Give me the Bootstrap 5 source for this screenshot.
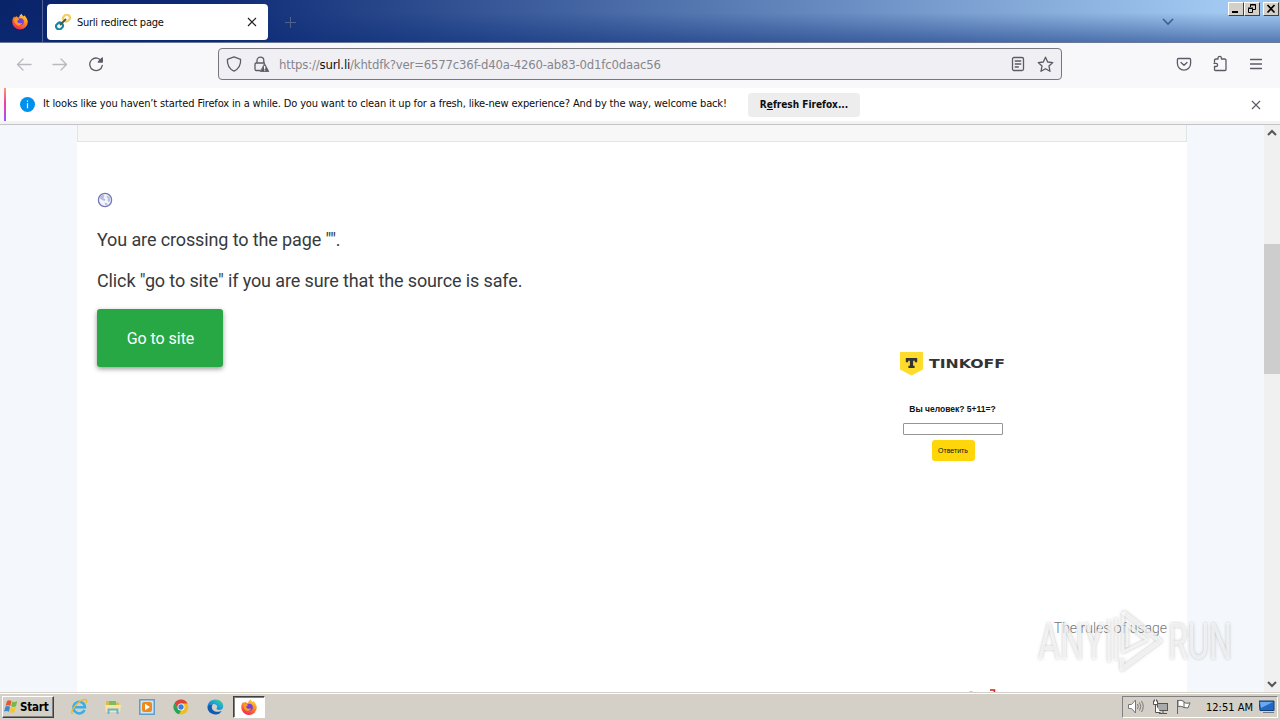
<!DOCTYPE html>
<html lang="en">
<head>
<meta charset="utf-8">
<meta name="viewport" content="width=device-width, initial-scale=1">
<title>Surli redirect page</title>
<link href="https://cdn.jsdelivr.net/npm/bootstrap@5.3.0/dist/css/bootstrap.min.css" rel="stylesheet">
<style>
body{width:1280px;height:720px;overflow:hidden;font-family:"DejaVu Sans Condensed","DejaVu Sans",sans-serif;font-size:11px;line-height:14px;color:#0c0c0d}
svg{display:block;flex:none}
.ui-ico{fill:none;stroke:#5b5b66;stroke-width:1.3;stroke-linecap:round;stroke-linejoin:round}
.titlebar{height:43px;background:linear-gradient(180deg,rgba(10,50,130,0) 30%,rgba(10,44,120,.5)),linear-gradient(90deg,#0a246a,#0d2a74 16%,#a0c8f0 95%);border-bottom:1px solid #6b7794}
.ff-view{width:43px;padding-right:2px;border-right:1px solid #52639a}
.tab{width:221px;height:36px;margin:4px 0 0 4px;background:#fff;border-radius:4px;padding:0 10px 0 8px}
.tab-title{margin:2px 0 0 6px;letter-spacing:-.25px}
.winbtn{width:16px;height:14px;background:#d4d0c8;border:1px solid;border-color:#fff #404040 #404040 #fff}
.tools{height:45px;background:#f8f8fb}
.tools .back{margin-left:16px}
.urlbar{width:844px;height:32px;margin-left:114px;background:#f0f0f4;border:1px solid #77777e;border-radius:4px;padding:0 7px}
.url{font-size:13px;font-weight:200;color:#85858d;margin:2px 0 0 9px;letter-spacing:-.18px;white-space:nowrap}
.url b{font-weight:400;color:#111}
.notice{height:33px;background:#fff;border-left:4px solid #f9f9fb}
.notice-edge{width:2px;height:33px;background:linear-gradient(#ff9a6a,#f0409a 45%,#9059ff)}
.notice-text{margin:-2px 0 0 8px;width:705px;white-space:nowrap;letter-spacing:-.15px}
.refresh{width:112px;height:24px;background:#ededee;border-radius:4px;font-weight:700;font-size:10px;line-height:24px;text-align:center;white-space:nowrap}
.chrome-end{height:4px;background:#f3f3f4;border-bottom:1px solid #c4c4c8}
.page-view{height:567px;background:#f4f8fc;overflow:hidden}
.sheet{width:1110px;margin-left:77px;background:#fff;font-family:Roboto,sans-serif;color:#373a3c}
.sheet-top{height:17px;background:#f7f7f7;border:1px solid #dfe5e8;border-top:0}
.msg{font-size:18px;line-height:24px;white-space:nowrap;letter-spacing:-.12px}
.go{width:126px;height:58px;background:#28a745;color:#fff;border-radius:3px;font-size:16px;line-height:60px;text-align:center;text-indent:1px;letter-spacing:-.05px;box-shadow:0 2px 5px rgba(0,0,0,.4)}
.captcha{width:108px;margin:41px 161px 0 0;font-family:"Liberation Sans",sans-serif;color:#111}
.ask{font-size:8.5px;line-height:12px;font-weight:700;margin:27px 0 0 1px;white-space:nowrap}
.answer{width:100px;height:12px;border:1px solid #959595;border-radius:1px;margin:8px 0 0 2px}
.reply{width:43px;height:21px;background:#ffd60a;border-radius:3px;font-size:7px;line-height:21px;text-align:center;margin:5px 0 0 2px}
.rules{font-size:14px;line-height:20px;color:#777;font-weight:300}
.scroller{width:16px;background:#f0f0f0}
.thumb{height:130px;background:#cdcdcd}
.taskbar{height:28px;background:#d4d0c8;border-top:1px solid #d4d0c8;box-shadow:inset 0 1px #fff}
.start{width:52px;height:22px;margin-left:2px;border:1px solid;border-color:#fff #404040 #404040 #fff;box-shadow:inset -1px -1px #808080;font-size:11.5px;font-weight:700;letter-spacing:-.2px;color:#000}
.task-on{width:32px;height:22px;background:#fff;border:1px solid;border-color:#404040 #fff #fff #404040;box-shadow:inset 1px 1px #808080}
.tray{width:156px;height:22px;border:1px solid;border-color:#808080 #fff #fff #808080;margin-right:2px;color:#000}
.brandmark{left:1030px;top:604px}
</style>
</head>
<body class="d-flex flex-column position-relative">
<svg width="0" height="0" class="position-absolute">
<defs>
<linearGradient id="fg" x1=".8" y1="0" x2=".3" y2="1"><stop offset="0" stop-color="#ffe047"/><stop offset=".45" stop-color="#ff8a1e"/><stop offset="1" stop-color="#f0255a"/></linearGradient>
<linearGradient id="eg" x1="0" y1="1" x2="1" y2="0"><stop offset="0" stop-color="#0b63b5"/><stop offset=".55" stop-color="#1ba5dc"/><stop offset="1" stop-color="#58d46a"/></linearGradient>
<symbol id="firefox" viewBox="0 0 16 16"><path fill="url(#fg)" d="M9.700.2c.2 1.400 1.200 2 2.100 2.800.3-.4.2-.8.2-1.200C14 3.300 15.800 5.800 15.800 8.500A7.700 7.500 0 0 1 .3 8.500C.2 6 1 4.300 2.300 2.700l.3 1.500C3.300 3.500 4 3 4.800 2.800c.5.7 1 1.300 2.200 1.300C7.200 2.300 8.200.9 9.700.2z"/><circle cx="8.300" cy="8.300" r="3.500" fill="#7440d8"/><path fill="#ff9b20" d="M2.500 5.100c2-.5 3.200.1 4.600.6-.2 1-1.800 1-1.900 2.300.5 2 3 2.200 5.100 1.200-1 3-4.300 3.500-6 1.800C2.600 9.600 2 7.500 2.500 5.100z"/></symbol>
</defs>
</svg>

<header class="titlebar d-flex flex-shrink-0">
  <div class="ff-view d-flex align-items-center justify-content-center"><svg width="16" height="17"><use href="#firefox"/></svg></div>
  <div class="tab d-flex align-items-center">
    <svg width="16" height="16" viewBox="0 0 16 16" fill="none" stroke-width="2.200"><rect x="8" y="1" width="7" height="6" rx="3" transform="rotate(-40 11.500 4)" stroke="#f0cf62"/><rect x="1" y="9" width="7" height="6" rx="3" transform="rotate(-40 4.500 12)" stroke="#1688a5"/><path d="M5 11l6-6" stroke="#5b5436" stroke-width="1.800"/></svg>
    <span class="tab-title">Surli redirect page</span>
    <svg class="ms-auto" width="12" height="12" viewBox="0 0 12 12" stroke="#222" stroke-width="1.200"><path d="M2 2l8 8M10 2l-8 8"/></svg>
  </div>
  <svg class="ms-3 mt-3" width="13" height="13" viewBox="0 0 13 13" stroke="#50618a"><path d="M6.500 1v11M1 6.500h11"/></svg>
  <svg class="ms-auto" style="margin-right:54px" width="12" height="43" viewBox="0 0 12 43" fill="none" stroke="#3f5f8d" stroke-width="1.600"><path d="M1 19l5 5 5-5"/></svg>
  <div class="d-flex pt-0" style="margin:2px 1px 0 0">
    <div class="winbtn"><svg width="14" height="12"><path d="M3 9h6" stroke="#000" stroke-width="2"/></svg></div>
    <div class="winbtn"><svg width="14" height="12" fill="none" stroke="#000"><path d="M5.500 4V1.500h5v5H8M5 2h6M3.500 5.500h4v4h-4zM3 5h5"/></svg></div>
    <div class="winbtn" style="margin-left:3px"><svg width="14" height="12"><path d="M3.500 2l7 7.500M10.500 2l-7 7.500" stroke="#000" stroke-width="1.700"/></svg></div>
  </div>
</header>

<nav class="tools d-flex align-items-center flex-shrink-0 pb-1">
  <svg class="ui-ico back" style="opacity:.4" width="16" height="16"><path d="M15 8.500H1.500M7 3L1.500 8.500 7 14"/></svg>
  <svg class="ui-ico" style="opacity:.4;margin-left:20px" width="16" height="16"><path d="M1 8.500h13.500M9 3L14.500 8.500 9 14"/></svg>
  <svg class="ui-ico" style="margin-left:20px" width="16" height="16"><path d="M13.700 5.500A6.300 6.300 0 1 0 14.300 9.300"/><path d="M14.300 2v4h-4z" fill="#5b5b66"/></svg>
  <div class="urlbar d-flex align-items-center">
    <svg class="ui-ico" width="16" height="16"><path d="M8 .9l6.600 2.500c.3 5-1.600 9.500-6.600 11.700C3 12.900 1.100 8.400 1.400 3.400z"/></svg>
    <svg class="ui-ico" style="margin-left:11px;margin-top:2px" width="17" height="17"><path d="M4 7V4.500a3.400 3.400 0 0 1 6.800 0V7M7 14.500H3.200A1.200 1.200 0 0 1 2 13.300V8.200A1.200 1.200 0 0 1 3.200 7h8.300"/><path fill="#5b5b66" stroke-width=".8" d="M11.700 7.800l4.100 7.700H7.600z"/><path stroke="#fff" d="M11.700 10.500v2M11.700 14.100v.1"/></svg>
    <span class="url">https://<b>surl.li</b>/khtdfk?ver=6577c36f-d40a-4260-ab83-0d1fc0daac56</span>
    <svg class="ui-ico ms-auto" width="14" height="16"><rect x="1.500" y="1.500" width="11" height="13" rx="1.500"/><path d="M4.200 5h5.600M4.200 8h5.600M4.200 11h3.200"/></svg>
    <svg class="ui-ico" style="margin:1px 0 0 12px" width="17" height="17"><path d="M8.500 1.200l2.200 4.800 5.100.6-3.800 3.500 1 5.200-4.500-2.600L4 15.300l1-5.200L1.200 6.600 6.300 6z"/></svg>
  </div>
  <svg class="ui-ico ms-auto" width="16" height="16"><path d="M2.500 2.500h11A1.200 1.200 0 0 1 14.600 3.700V7.500a6.600 6.600 0 0 1-13.200 0V3.700A1.200 1.200 0 0 1 2.500 2.500zM5 6.500l3 2.800 3-2.800"/></svg>
  <svg class="ui-ico" style="margin-left:20px" width="16" height="17"><path d="M2.500 7V5.200A1.200 1.200 0 0 1 3.700 4H6V3a1.700 1.700 0 0 1 3.400 0v1h3.400A1.200 1.200 0 0 1 14 5.200v9.300a1 1 0 0 1-1 1H3.500a1 1 0 0 1-1-1v-3H4A1.600 1.600 0 0 0 4 8.300H2"/></svg>
  <svg class="ui-ico" style="margin:0 16px 0 20px" width="16" height="16"><path d="M2.500 3.500h11M2.500 8h11M2.500 12.500h11"/></svg>
</nav>

<div class="notice d-flex align-items-center flex-shrink-0">
  <div class="notice-edge"></div>
  <svg style="margin-left:14px" width="15" height="15"><circle cx="7.500" cy="7.500" r="7.500" fill="#0090ed"/><path d="M7.500 6.300v5M7.500 3.500v1.300" stroke="#fff" stroke-width="1.200"/></svg>
  <span class="notice-text">It looks like you haven’t started Firefox in a while. Do you want to clean it up for a fresh, like-new experience? And by the way, welcome back!</span>
  <div class="refresh">R<u>e</u>fresh Firefox...</div>
  <svg class="ms-auto" style="margin-right:19px" width="10" height="10" stroke="#5b5b66" stroke-width="1.100"><path d="M1 1l8 8M9 1L1 9"/></svg>
</div>
<div class="chrome-end flex-shrink-0"></div>

<main class="page-view d-flex flex-shrink-0">
  <article class="sheet">
    <div class="sheet-top"></div>
    <div class="d-flex flex-column" style="padding:50px 20px 0">
      <svg width="16" height="16"><circle cx="8" cy="8" r="6.600" fill="#f4f5fc" stroke="#7376b5" stroke-width="1.300"/><path fill="#b9bcdd" d="M3 5l2.500-2.500 2 1-1 2.500 2 1.500-1 1.500-2.500-1-2-1.500zM10 3.500l2.500 1.500.7 3-1.200 2.500-1.500-2 .5-2-1.500-1.500zM7.500 10.500l3 1v1.500l-2 .5z"/></svg>
      <div class="msg" style="margin-top:20px">You are crossing to the page "".</div>
      <div class="msg" style="margin-top:17px">Click "go to site" if you are sure that the source is safe.</div>
      <div class="d-flex justify-content-between" style="margin-top:16px">
        <div class="go">Go to site</div>
        <section class="captcha d-flex flex-column align-items-center">
          <svg width="108" height="26"><path d="M2 2h23v17.500L13.500 25.500 2 19.500z" fill="#fddc2b"/><path d="M7.800 8h11.400v4.300h-2.400V10.700h-1.700v5h1.500V18h-6.200v-2.300h1.500v-5h-1.700v1.600H7.800z" fill="#333"/><text x="31" y="18" textLength="76" lengthAdjust="spacingAndGlyphs" font-family="DejaVu Sans" font-weight="700" font-size="13" fill="#333">TINKOFF</text></svg>
          <div class="ask">Вы человек? 5+11=?</div>
          <div class="answer"></div>
          <div class="reply">Ответить</div>
        </section>
      </div>
      <div class="rules text-end" style="margin-top:157px">The rules of usage</div>
      <svg style="margin:50px 0 0 872px" width="30" height="6"><path d="M0 4h4" stroke="#aaa"/><path d="M21 2h4.500v3" stroke="#c22" stroke-width="1.500" fill="none"/></svg>
    </div>
  </article>
  <aside class="scroller ms-auto d-flex flex-column">
    <svg width="16" height="119" fill="none" stroke="#555" stroke-width="2"><path d="M4 10l4-4 4 4"/></svg>
    <div class="thumb"></div>
    <svg class="mt-auto" width="16" height="16" fill="none" stroke="#555" stroke-width="2"><path d="M4 6l4 4 4-4"/></svg>
  </aside>
</main>

<footer class="taskbar d-flex align-items-center flex-shrink-0">
  <div class="start d-flex align-items-center"><svg width="17" height="16" viewBox="0 0 17 16"><path fill="#e5582b" d="M4 2q2-1.500 4.500 0L7.300 7Q5 5.500 2.600 6.800z"/><path fill="#79b843" d="M9.300 2.400q2.500 1.300 5-.2L13 7.200q-2.500 1.400-4.900 0z"/><path fill="#3b8ad0" d="M2.400 7.700q2.300-1.400 4.700.2L5.900 12.700q-2.200-1.500-4.800-.2z"/><path fill="#f7c52d" d="M7.900 8.200q2.400 1.300 4.900 0l-1.300 4.900q-2.500 1.400-4.800-.1z"/></svg><span class="start-label">Start</span></div>
  <svg style="margin-left:16px" width="18" height="18" viewBox="0 0 18 18" fill="none"><path d="M14.500 12A5.800 5.800 0 1 1 15 9.300H5" stroke="#3aaee8" stroke-width="2.500"/><path d="M2.500 16C-1 14 9 1 15.500 1.500c2 .5 1 2.500.5 3.500" stroke="#edb832" stroke-width="1.400"/></svg>
  <svg style="margin-left:17px" width="16" height="16" viewBox="0 0 16 16"><path fill="#e2b84e" d="M1 2h5l1 1.500h7V13H1z"/><path fill="#76bd64" d="M4 2h7v4H4z"/><path fill="#f9e69b" d="M0 6h16l-1 7H1z"/><path d="M3.500 15v-4.500h9V15" stroke="#65b3dd" stroke-width="2" fill="none"/></svg>
  <svg style="margin-left:18px" width="16" height="16"><rect x=".8" y=".8" width="14.400" height="14.400" fill="#cfe5f5" stroke="#4b94c6" stroke-width="1.300"/><rect x="3" y="3" width="10" height="10" rx="2" fill="#f0891b"/><path d="M6 4.800v6.400L11 8z" fill="#fff"/></svg>
  <svg style="margin-left:18px" width="16" height="16" viewBox="0 0 16 16"><circle cx="8" cy="8" r="7.500" fill="#efbe27"/><path fill="#dc4436" d="M1.500 4.200a7.500 7.500 0 0 1 13 .3H8L5 10z"/><path fill="#28a35a" d="M1.500 4.200L5 10l3 1.700-2 3.600A7.500 7.500 0 0 1 1.500 4.200z"/><circle cx="8" cy="8" r="3.500" fill="#fff"/><circle cx="8" cy="8" r="2.700" fill="#3b7de8"/></svg>
  <svg style="margin-left:18px" width="17" height="16" viewBox="0 0 17 16"><path fill="url(#eg)" d="M.5 8C.6 3.500 4 .5 8.500.5c5 0 8 3.500 7.800 7-.1 2.500-2 3.500-4 3.500-1.500 0-2.800-.5-2.800-1.200 0-.6.8-.9.700-2C10 6 8.500 5 6.500 5 3.500 5 1 6.500.5 8z"/><path fill="#0d5eb0" d="M.5 8C1.200 6 3.300 5 6 5.200 3.600 7.500 5 12 9 12.700c2.500.4 4.300-.3 5.800-1C13 14.500 11 15.700 8.500 15.500 3.500 15.300.3 12 .5 8z"/></svg>
  <div class="task-on d-flex align-items-center justify-content-center" style="margin-left:9px"><svg width="16" height="16"><use href="#firefox"/></svg></div>
  <div class="tray d-flex align-items-center ms-auto ps-1">
    <svg width="18" height="16" fill="#fff" stroke="#777"><path d="M1.500 5.500h3L8.500 1v13l-4-4.500h-3z"/><path fill="none" d="M10.500 5q1.500 2.500 0 5M12.500 3.500q2.500 4 0 8M14.500 2q3.500 5.500 0 11"/></svg>
    <svg style="margin-left:7px" width="17" height="16" fill="#fff" stroke="#555"><rect x="5.500" y="4.500" width="10" height="7" fill="#aaa"/><path d="M7 14.500h8M11 12v2"/><path d="M1.500 1.500v4h4v-4M3.500 5.500v8h5M2.500.5v2M4.500.5v2"/></svg>
    <svg style="margin-left:7px" width="17" height="16" fill="#fff" stroke="#666"><path d="M1.500 1v14M2 1.500q3-1 6 1v6q-3-2-6-1zM8 3.500q3 1.500 6 .3l-2 5.200-4-.5"/></svg>
    <span class="clock" style="margin:2px 0 0 13px;white-space:nowrap">12:51 AM</span>
    <svg style="margin-left:6px" width="16" height="14"><path d="M0 1l15 0v9.500H1z" fill="#2468c6" stroke="#173e78"/><path d="M1 2h13L2 8z" fill="#6aa9ec"/><path d="M4 12.500h11" stroke="#707a83"/></svg>
  </div>
</footer>

<svg class="brandmark position-absolute" width="208" height="74" viewBox="0 0 208 74" style="filter:drop-shadow(0 0 1.500px rgba(80,80,80,.5))">
  <g fill="#fff" fill-opacity=".65" font-family="Roboto" font-size="50"><text x="8" y="55" textLength="66" lengthAdjust="spacingAndGlyphs">ANY</text><text x="138" y="55" textLength="64" lengthAdjust="spacingAndGlyphs">RUN</text></g>
  <g fill="none" stroke="#fff" stroke-opacity=".7" stroke-width="4.500" stroke-linejoin="round"><path d="M93 8l37 29-38 28V55"/><path d="M79 16v42M86 14v42M93 8v40l24-12-20-15v22" stroke-width="3"/></g>
</svg>
<script src="https://cdn.jsdelivr.net/npm/bootstrap@5.3.0/dist/js/bootstrap.bundle.min.js"></script>
</body>
</html>
